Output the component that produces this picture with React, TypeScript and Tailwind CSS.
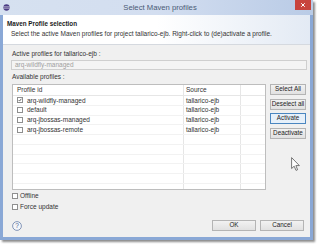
import { X } from 'lucide-react';

const profiles = [
  { id: 'arq-wildfly-managed', source: 'tallarico-ejb', checked: true },
  { id: 'default', source: 'tallarico-ejb', checked: false },
  { id: 'arq-jbossas-managed', source: 'tallarico-ejb', checked: false },
  { id: 'arq-jbossas-remote', source: 'tallarico-ejb', checked: false },
];

const emptyRows = [0, 1, 2, 3, 4, 5];

function CheckBox({ checked = false }: { checked?: boolean }) {
  return (
    <div className="w-[6px] h-[6px] border border-[#8f8f8f] bg-white flex items-center justify-center shrink-0">
      {checked && (
        <svg viewBox="0 0 6 6" className="w-[6px] h-[6px]">
          <path d="M1 3.2 L2.4 4.6 L5 1.2" fill="none" stroke="#222" strokeWidth="1" />
        </svg>
      )}
    </div>
  );
}

function Button({ label, active = false, wide = false }: { label: string; active?: boolean; wide?: boolean }) {
  return (
    <div
      className={`h-[11px] flex items-center justify-center border text-[6.3px] leading-none text-[#222] whitespace-nowrap ${
        wide ? 'w-[44px]' : 'w-full'
      } ${active ? 'border-[#4a86c0] bg-[#e6f0fa]' : 'border-[#b4b4b4] bg-gradient-to-b from-[#f2f2f2] to-[#e1e1e1]'}`}
    >
      {label}
    </div>
  );
}

export default function App() {
  return (
    <div className="w-[318px] h-[246px] bg-white relative overflow-hidden font-['Liberation_Sans',Arial,sans-serif]">
      {/* Window */}
      <div className="w-[313px] h-[240px] bg-[#8aa8d6] flex flex-col px-[3px] pb-[3px] shadow-[2px_2px_2px_rgba(0,0,0,0.45)]">
        {/* Title bar */}
        <div className="h-[15px] -mx-[3px] px-[3px] bg-gradient-to-r from-[#d6e1f0] via-[#d3def0] to-[#b9cbe6] flex items-center relative">
          <svg viewBox="0 0 8 8" className="w-[7px] h-[7px]">
            <circle cx="4" cy="4" r="3.6" fill="#4b3c84" />
            <rect x="0.6" y="3" width="6.8" height="0.6" fill="#fff" />
            <rect x="0.6" y="4.4" width="6.8" height="0.6" fill="#fff" />
          </svg>
          <div className="flex-1 text-center text-[7.7px] text-[#4a5a75] leading-none">Select Maven profiles</div>
          <div className="absolute right-[2px] top-0 w-[16px] h-[10px] bg-[#c8443d] flex items-center justify-center">
            <X className="w-[6px] h-[6px] text-white" strokeWidth={4} />
          </div>
        </div>

        {/* Header */}
        <div className="h-[30px] bg-gradient-to-r from-white via-white to-[#e3eaf4] border-b border-[#d5d9df] pt-[5px] pl-[4px] flex flex-col gap-[3px]">
          <div className="text-[6.3px] leading-[7px] font-bold text-[#1a1a1a]">Maven Profile selection</div>
          <div className="pl-[4px] text-[6.5px] leading-[7px] text-[#333] whitespace-nowrap">
            Select the active Maven profiles for project tallarico-ejb. Right-click to (de)activate a profile.
          </div>
        </div>

        {/* Body */}
        <div className="flex-1 bg-[#f0f0f0] pl-[8px] pr-[3px] pt-[5px] flex flex-col text-[6.5px] text-[#333]">
          <div className="pl-[1px] leading-[7px]">Active profiles for tallarico-ejb :</div>
          <div className="mt-[3px] h-[10px] border border-[#cfcfcf] bg-[#f4f4f4] flex items-center pl-[3px] text-[#a0a0a0]">
            arq-wildfly-managed
          </div>
          <div className="mt-[3px] pl-[1px] leading-[7px]">Available profiles :</div>

          <div className="mt-[4px] flex gap-[4px] pl-[1px]">
            {/* Table */}
            <div className="w-[254px] h-[106px] bg-white border border-[#bdbdbd] overflow-hidden">
              <div className="h-[11px] flex border-b border-[#e6e6e6]">
                <div className="w-[171px] pl-[4px] flex items-center border-r border-[#e6e6e6]">Profile id</div>
                <div className="w-[57px] pl-[2px] flex items-center border-r border-[#e6e6e6]">Source</div>
                <div className="flex-1" />
              </div>
              {profiles.map((p) => (
                <div key={p.id} className="h-[9.75px] flex border-b border-[#f2f2f2]">
                  <div className="w-[171px] pl-[4px] flex items-center gap-[4px] border-r border-[#e6e6e6]">
                    <CheckBox checked={p.checked} />
                    <span>{p.id}</span>
                  </div>
                  <div className="w-[57px] pl-[2px] flex items-center border-r border-[#e6e6e6]">{p.source}</div>
                  <div className="flex-1" />
                </div>
              ))}
              {emptyRows.map((r) => (
                <div key={r} className="h-[9.75px] flex border-b border-[#f2f2f2]">
                  <div className="w-[171px] border-r border-[#e6e6e6]" />
                  <div className="w-[57px] border-r border-[#e6e6e6]" />
                  <div className="flex-1" />
                </div>
              ))}
            </div>

            {/* Side buttons */}
            <div className="w-[36px] flex flex-col gap-[3.5px]">
              <Button label="Select All" />
              <Button label="Deselect all" />
              <Button label="Activate" active />
              <Button label="Deactivate" />
            </div>
          </div>

          <div className="mt-[2.5px] pl-[1px] flex items-center gap-[2px] h-[7px]">
            <CheckBox />
            <span>Offline</span>
          </div>
          <div className="mt-[4px] pl-[1px] flex items-center gap-[2px] h-[7px]">
            <CheckBox />
            <span>Force update</span>
          </div>

          <div className="mt-[9.5px] flex items-center pl-[1px]">
            <svg viewBox="0 0 10 10" className="w-[10px] h-[10px]">
              <circle cx="5" cy="5" r="4.4" fill="#f4f6fa" stroke="#6a7fa8" strokeWidth="0.8" />
              <text x="5" y="7.4" textAnchor="middle" fontSize="6.5" fill="#4a5f8c" fontFamily="Liberation Sans, Arial, sans-serif">?</text>
            </svg>
            <div className="flex-1" />
            <div className="flex gap-[4px] mr-[3px]">
              <Button label="OK" wide />
              <Button label="Cancel" wide />
            </div>
          </div>
        </div>
      </div>

      {/* Mouse cursor */}
      <svg viewBox="0 0 10 15" className="absolute left-[291px] top-[157px] w-[10px] h-[15px]">
        <path d="M0.6 0.6 L0.6 11.5 L3.2 9.2 L5 13.4 L6.6 12.7 L4.9 8.6 L8.4 8.6 Z" fill="#fff" stroke="#555" strokeWidth="0.8" strokeLinejoin="round" />
      </svg>
    </div>
  );
}
